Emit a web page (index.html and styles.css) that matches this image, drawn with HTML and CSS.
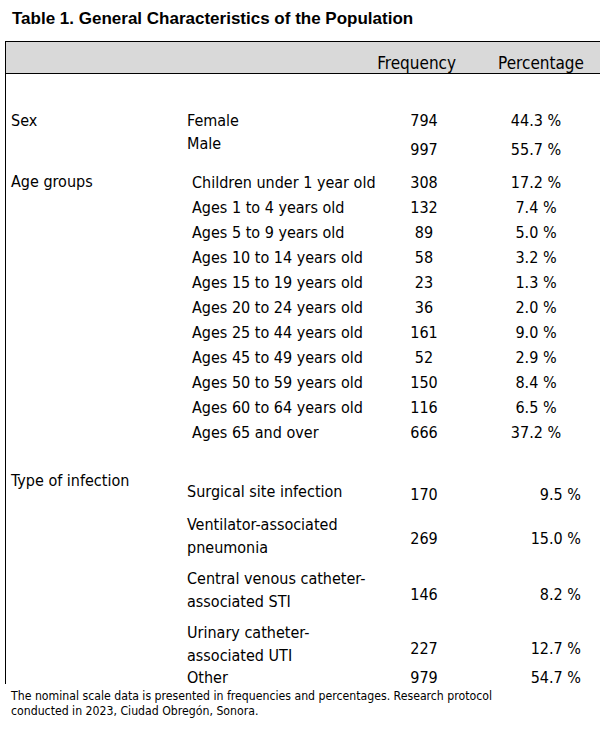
FILE: index.html
```html
<!DOCTYPE html>
<html lang="en">
<head>
<meta charset="utf-8">
<title>Table 1</title>
<link rel="stylesheet" href="styles.css">
</head>
<body>
<h1 class="title">Table 1. General Characteristics of the Population</h1>
<div class="table">
  <div class="thead">
    <span class="th th-freq">Frequency</span>
    <span class="th th-pct">Percentage</span>
  </div>
  <div class="tbody">
    <section class="group group-sex">
      <div class="label">Sex</div>
      <div class="row">
        <div class="item">Female</div>
        <div class="freq">794</div>
        <div class="pct">44.3 %</div>
      </div>
      <div class="row row-male">
        <div class="item">Male</div>
        <div class="freq shift">997</div>
        <div class="pct shift">55.7 %</div>
      </div>
    </section>

    <section class="group group-age">
      <div class="label">Age groups</div>
      <div class="row"><div class="item">Children under 1 year old</div><div class="freq">308</div><div class="pct">17.2 %</div></div>
      <div class="row"><div class="item">Ages 1 to 4 years old</div><div class="freq">132</div><div class="pct">7.4 %</div></div>
      <div class="row"><div class="item">Ages 5 to 9 years old</div><div class="freq">89</div><div class="pct">5.0 %</div></div>
      <div class="row"><div class="item">Ages 10 to 14 years old</div><div class="freq">58</div><div class="pct">3.2 %</div></div>
      <div class="row"><div class="item">Ages 15 to 19 years old</div><div class="freq">23</div><div class="pct">1.3 %</div></div>
      <div class="row"><div class="item">Ages 20 to 24 years old</div><div class="freq">36</div><div class="pct">2.0 %</div></div>
      <div class="row"><div class="item">Ages 25 to 44 years old</div><div class="freq">161</div><div class="pct">9.0 %</div></div>
      <div class="row"><div class="item">Ages 45 to 49 years old</div><div class="freq">52</div><div class="pct">2.9 %</div></div>
      <div class="row"><div class="item">Ages 50 to 59 years old</div><div class="freq">150</div><div class="pct">8.4 %</div></div>
      <div class="row"><div class="item">Ages 60 to 64 years old</div><div class="freq">116</div><div class="pct">6.5 %</div></div>
      <div class="row"><div class="item">Ages 65 and over</div><div class="freq">666</div><div class="pct">37.2 %</div></div>
    </section>

    <section class="group group-inf">
      <div class="label">Type of infection</div>
      <div class="row r1"><div class="item">Surgical site infection</div><div class="freq">170</div><div class="pct">9.5 %</div></div>
      <div class="row r2"><div class="item">Ventilator-associated<br>pneumonia</div><div class="freq">269</div><div class="pct">15.0 %</div></div>
      <div class="row r3"><div class="item">Central venous catheter-<br>associated STI</div><div class="freq">146</div><div class="pct">8.2 %</div></div>
      <div class="row r4"><div class="item">Urinary catheter-<br>associated UTI</div><div class="freq">227</div><div class="pct">12.7 %</div></div>
      <div class="row r5"><div class="item">Other</div><div class="freq">979</div><div class="pct">54.7 %</div></div>
    </section>
  </div>
</div>
<p class="note">The nominal scale data is presented in frequencies and percentages. Research protocol<br>conducted in 2023, Ciudad Obregón, Sonora.</p>
</body>
</html>
```

FILE: styles.css
```css
html, body {
  margin: 0;
  padding: 0;
  background: #ffffff;
  color: #000000;
}

body {
  width: 600px;
  font-family: "DejaVu Sans Condensed", "DejaVu Sans", sans-serif;
  font-stretch: condensed;
  font-size: 16px;
}

.title {
  margin: 0 0 13px 0;
  padding: 9px 0 0 12px;
  height: 19px;
  font-family: "Liberation Sans", Arial, sans-serif;
  font-stretch: normal;
  font-weight: bold;
  font-size: 17px;
  line-height: 19px;
}

.table {
  margin-left: 5px;
  border-top: 1px solid #000;
  border-left: 1px solid #000;
}

.thead {
  display: flex;
  justify-content: flex-end;
  align-items: flex-end;
  gap: 42px;
  height: 32px;
  padding-right: 16px;
  padding-bottom: 2px;
  box-sizing: border-box;
  background: #d9d9d9;
  border-bottom: 1px solid #000;
  font-size: 17px;
  line-height: 15px;
}

.tbody {
  padding-top: 35px;
}

.group {
  display: grid;
  grid-template-columns: 181px 208px 58px 147px;
  align-items: center;
}

.label {
  grid-column: 1;
  grid-row: 1 / span 20;
  align-self: start;
  padding-left: 5px;
  line-height: 23px;
}

.row {
  display: contents;
}

.item {
  grid-column: 2;
  line-height: 23px;
}

.freq {
  grid-column: 3;
  text-align: center;
  line-height: 23px;
}

.pct {
  grid-column: 4;
  padding-left: 19px;
  text-align: center;
  line-height: 23px;
}

/* Sex */
.row-male .item {
  align-self: start;
}
.row-male .shift {
  align-self: start;
  margin-top: 6px;
}
.group-sex {
  margin-bottom: 9px;
}

/* Age groups */
.group-age .item,
.group-age .freq,
.group-age .pct {
  line-height: 25px;
}
.group-age .item {
  padding-left: 5px;
}
.group-age .label {
  line-height: 23px;
}

/* Infection */
.group-inf {
  margin-top: 19px;
}
.group-inf .label {
  padding-top: 5px;
}
.group-inf .pct {
  padding-left: 0;
  padding-right: 19px;
  text-align: right;
}
.group-inf .freq,
.group-inf .pct {
  padding-top: 8px;
}

.r1 .item, .r1 .freq, .r1 .pct { margin-top: 13px; }
.r2 .item, .r2 .freq, .r2 .pct { margin-top: 7px; }
.r3 .item, .r3 .freq, .r3 .pct { margin-top: 8px; }
.r4 .item, .r4 .freq, .r4 .pct { margin-top: 8px; }

.group-inf .r1 .freq, .group-inf .r1 .pct { padding-top: 6px; }
.group-inf .r2 .freq, .group-inf .r2 .pct { padding-top: 4px; }

.r5 .item, .r5 .freq, .r5 .pct {
  margin-top: 4px;
  line-height: 13px;
}
.group-inf .r5 .freq,
.group-inf .r5 .pct { padding-top: 0; }

.note {
  margin: 0;
  padding: 5px 0 0 11px;
  font-size: 12.2px;
  line-height: 15px;
}
```
